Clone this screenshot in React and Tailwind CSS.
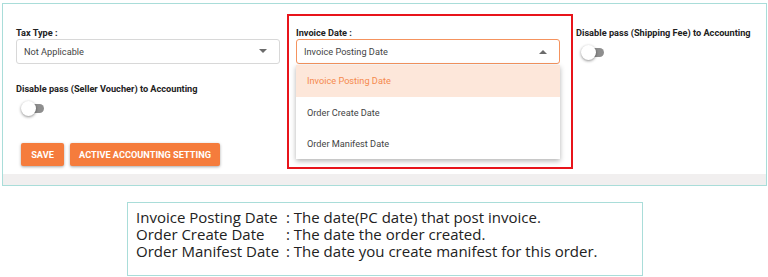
export default function App() {
  const Toggle = () => (
    <div className="relative h-[15px] w-[25px]">
      <div className="absolute left-[10px] top-[3px] h-[9px] w-[13px] rounded-full bg-[#8e8e8e]" />
      <div className="absolute left-0 top-0 h-[15px] w-[15px] rounded-full bg-white shadow-[0_1px_3px_rgba(0,0,0,0.45)]" />
    </div>
  );
  const Caret = ({ up }) => (
    <svg width="8" height="5" viewBox="0 0 8 5" className="text-[#6b6b6b]">
      {up ? <path d="M0 5 L4 1 L8 5 Z" fill="currentColor" /> : <path d="M0 0 L4 4 L8 0 Z" fill="currentColor" />}
    </svg>
  );
  return (
    <div className="h-[277px] w-[768px] bg-white" style={{ fontFamily: "Roboto, 'Liberation Sans', sans-serif" }}>
      <div className="ml-[2px] pt-[3px]">
        <div className="relative flex h-[183px] w-[765px] flex-col border border-[#a9ddd9]">
          <div className="flex flex-1 gap-[16px] pl-[13px] pt-[22px]">
            {/* col 1 */}
            <div className="flex w-[264px] shrink-0 flex-col">
              <div className="h-[13px] whitespace-nowrap text-[9.2px] font-bold leading-[13px] text-[#222]">Tax Type :</div>
              <div className="flex h-[25px] items-center justify-between rounded-[3px] border border-[#d8d8d8] pl-[7px] pr-[12px] text-[9.2px] text-[#444]">
                <span>Not Applicable</span>
                <Caret />
              </div>
              <div className="mt-[18px] h-[13px] whitespace-nowrap text-[9.2px] font-bold leading-[13px] text-[#222]">
                Disable pass (Seller Voucher) to Accounting
              </div>
              <div className="ml-[5px] mt-[6px]">
                <Toggle />
              </div>
              <div className="ml-[5px] mt-[27px] flex gap-[6px]">
                <button className="h-[23px] w-[43px] rounded-[2px] bg-[#f57c3c] text-[9.2px] font-bold text-white shadow-[0_1px_3px_rgba(0,0,0,0.35)]">
                  SAVE
                </button>
                <button className="h-[23px] w-[150px] whitespace-nowrap rounded-[2px] bg-[#f57c3c] text-[9.2px] font-bold text-white shadow-[0_1px_3px_rgba(0,0,0,0.35)]">
                  ACTIVE ACCOUNTING SETTING
                </button>
              </div>
            </div>
            {/* col 2 */}
            <div className="relative flex w-[264px] shrink-0 flex-col">
              <div className="h-[13px] whitespace-nowrap text-[9.2px] font-bold leading-[13px] text-[#222]">Invoice Date :</div>
              <div className="flex h-[25px] items-center justify-between rounded-[3px] border border-[#f5935e] pl-[7px] pr-[12px] text-[9.2px] text-[#444]">
                <span>Invoice Posting Date</span>
                <Caret up />
              </div>
              <div className="absolute left-0 top-[39px] z-10 w-[264px] bg-white text-[9.2px] shadow-[0_2px_5px_rgba(0,0,0,0.3)]">
                <div className="flex h-[32px] items-center bg-[#fde7da] pl-[11px] text-[#f58a4e]">Invoice Posting Date</div>
                <div className="flex h-[31px] items-center pl-[11px] text-[#444]">Order Create Date</div>
                <div className="flex h-[31px] items-center pl-[11px] text-[#444]">Order Manifest Date</div>
              </div>
              <div className="pointer-events-none absolute left-[-9px] top-[-12px] z-20 h-[155px] w-[286px] border-2 border-[#e8141b]" />
            </div>
            {/* col 3 */}
            <div className="flex flex-col">
              <div className="h-[13px] whitespace-nowrap text-[9.2px] font-bold leading-[13px] text-[#222]">
                Disable pass (Shipping Fee) to Accounting
              </div>
              <div className="ml-[5px] mt-[6px]">
                <Toggle />
              </div>
            </div>
          </div>
          <div className="h-[11px] bg-[#f1efef]" />
        </div>
      </div>
      <div
        className="ml-[127px] mt-[16px] h-[74px] w-[516px] border border-[#a9ddd9] pl-[8px] pt-[6px] text-[15px] leading-[17px] text-[#222]"
        style={{ fontFamily: "'Open Sans', Lato, sans-serif" }}
      >
        <div className="flex"><span className="w-[150px] whitespace-nowrap">Invoice Posting Date</span><span className="whitespace-nowrap">: The date(PC date) that post invoice.</span></div>
        <div className="flex"><span className="w-[150px] whitespace-nowrap">Order Create Date</span><span className="whitespace-nowrap">: The date the order created.</span></div>
        <div className="flex"><span className="w-[150px] whitespace-nowrap">Order Manifest Date</span><span className="whitespace-nowrap">: The date you create manifest for this order.</span></div>
      </div>
    </div>
  );
}
